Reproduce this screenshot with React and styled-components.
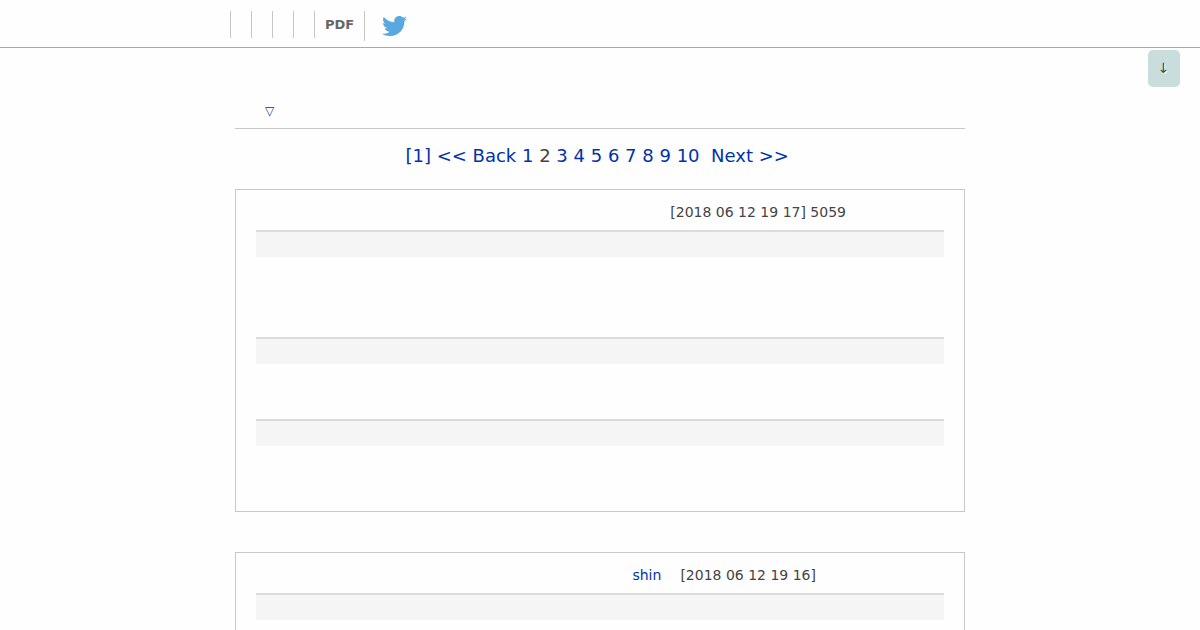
import React from "react";
import styled, { createGlobalStyle } from "styled-components";

const GlobalStyle = createGlobalStyle`
  * {
    box-sizing: border-box;
  }
  body {
    margin: 0;
    background: #fefefe;
    color: #444444;
    font-family: "DejaVu Sans", sans-serif;
    font-size: 14px;
    line-height: 20px;
  }
  a {
    color: #0033aa;
    text-decoration: none;
  }
`;

const Header = styled.header`
  height: 48px;
  padding-top: 11px;
  border-bottom: 1px solid #a3aba7;
`;

const Menu = styled.ul`
  display: flex;
  align-items: flex-start;
  max-width: 740px;
  margin: 0 auto;
  padding: 0;
  list-style: none;
`;

const MenuItem = styled.li`
  height: ${({ $tall }) => ($tall ? "30px" : "27px")};
  padding: 0 10px;
  border-left: 1px solid #c6c6c6;
  font-size: 13px;
  font-weight: bold;
  line-height: 27px;

  a {
    color: #666666;
  }
`;

const TwitterLink = styled.a`
  display: flex;
  align-items: center;
  height: 30px;
  margin-left: 7px;

  svg {
    width: 25px;
    height: 20px;
    fill: #5aa8e0;
  }
`;

const ScrollButton = styled.button`
  position: fixed;
  top: 50px;
  right: 20px;
  width: 32px;
  height: 37px;
  padding: 0 1px 2px 0;
  border: 0;
  border-radius: 5px;
  background: #cadddd;
  color: #444444;
  font-family: inherit;
  font-size: 14px;
  text-shadow: 1px 1px 0 #ffffff;
`;

const Main = styled.main`
  max-width: 730px;
  margin: 0 auto;
  padding-top: 48px;
`;

const SortBar = styled.div`
  height: 33px;
  padding: 5px 30px;
  border-bottom: 1px solid #c6c6c6;
  font-size: 12px;
`;

const Pager = styled.nav`
  padding: 16px 0 22px;
  text-align: center;
  white-space: pre-wrap;
  font-size: 18px;
  line-height: 22px;
`;

const Card = styled.article`
  margin-bottom: 40px;
  padding: 0 20px;
  border: 1px solid #c8c8c8;
`;

const CardHeader = styled.div`
  display: flex;
  justify-content: flex-end;
  gap: 19px;
  height: 40px;
  padding: 12px ${({ $indent }) => $indent}px 8px 0;
`;

const CardTitle = styled.div`
  height: 27px;
  border-top: 2px solid #dbdbdb;
  background: #f5f5f5;
`;

const CardBody = styled.div`
  min-height: ${({ $height }) => $height}px;
`;

const pages = [3, 4, 5, 6, 7, 8, 9, 10];

const posts = [
  { id: 1, date: "[2018 06 12 19 17] 5059", indent: 98, sections: [80, 55, 65] },
  {
    id: 2,
    author: "shin",
    date: "[2018 06 12 19 16]",
    indent: 128,
    sections: [80],
  },
];

function Bird() {
  return (
    <svg viewBox="0 48 512 416" preserveAspectRatio="none" aria-hidden="true">
      <path d="M459.37 151.716c.325 4.548.325 9.097.325 13.645 0 138.72-105.583 298.558-298.558 298.558-59.452 0-114.68-17.219-161.137-47.106 8.447.974 16.568 1.299 25.34 1.299 49.055 0 94.213-16.568 130.274-44.832-46.132-.975-84.792-31.188-98.112-72.772 6.498.974 12.995 1.624 19.818 1.624 9.421 0 18.843-1.3 27.614-3.573-48.081-9.747-84.143-51.98-84.143-102.985v-1.299c13.969 7.797 30.214 12.67 47.431 13.319-28.264-18.843-46.781-51.005-46.781-87.391 0-19.492 5.197-37.36 14.294-52.954 51.655 63.675 129.3 105.258 216.365 109.807-1.624-7.797-2.599-15.918-2.599-24.04 0-57.828 46.782-104.934 104.934-104.934 30.213 0 57.502 12.67 76.67 33.137 23.715-4.548 46.456-13.32 66.599-25.34-7.798 24.366-24.366 44.833-46.132 57.827 21.117-2.273 41.584-8.122 60.426-16.243-14.292 20.791-32.161 39.308-52.628 54.253z" />
    </svg>
  );
}

function Post({ author, date, indent, sections }) {
  return (
    <Card>
      <CardHeader $indent={indent}>
        {author && <a href="#author">{author}</a>}
        <span>{date}</span>
      </CardHeader>
      {sections.map((height, i) => (
        <section key={i}>
          <CardTitle />
          <CardBody $height={height} />
        </section>
      ))}
    </Card>
  );
}

function App() {
  return (
    <>
      <GlobalStyle />
      <Header>
        <Menu>
          <MenuItem />
          <MenuItem />
          <MenuItem />
          <MenuItem />
          <MenuItem>
            <a href="#pdf">PDF</a>
          </MenuItem>
          <MenuItem $tall>
            <TwitterLink href="#twitter" aria-label="Twitter">
              <Bird />
            </TwitterLink>
          </MenuItem>
        </Menu>
      </Header>
      <ScrollButton type="button">↓</ScrollButton>
      <Main>
        <SortBar>
          <a href="#sort">▽</a>
        </SortBar>
        <Pager>
          <a href="#first">[1]</a> <a href="#back">&lt;&lt; Back</a>{" "}
          <a href="#1">1</a> <span>2</span>{" "}
          {pages.map((page) => (
            <React.Fragment key={page}>
              <a href={`#${page}`}>{page}</a>{" "}
            </React.Fragment>
          ))}
          &nbsp;<a href="#next">Next &gt;&gt;</a>&nbsp;
        </Pager>
        {posts.map((post) => (
          <Post key={post.id} {...post} />
        ))}
      </Main>
    </>
  );
}

export default App;
